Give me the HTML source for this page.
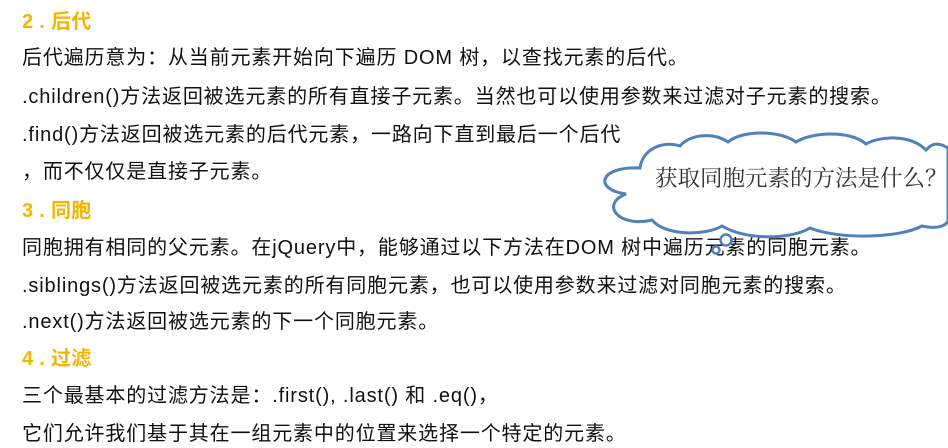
<!DOCTYPE html>
<html><head><meta charset="utf-8"><style>
body{margin:0;width:948px;height:448px;background:#fff;overflow:hidden;position:relative;font-family:"Liberation Sans","Noto Sans CJK SC",sans-serif;color:#111;}
.l{position:absolute;left:22px;font-size:20px;line-height:24px;white-space:nowrap;letter-spacing:0.85px}
.h{color:#f5b400;font-weight:bold;letter-spacing:0.3px}
.c{position:absolute;left:655px;top:161px;font-family:"Liberation Serif","Noto Serif CJK SC",serif;font-size:22.5px;color:#333;white-space:nowrap}
</style></head><body>
<div class="l h" style="top:10px">2 . 后代</div>
<div class="l" style="top:46px">后代遍历意为：从当前元素开始向下遍历 DOM 树，以查找元素的后代。</div>
<div class="l" style="top:85px">.children()方法返回被选元素的所有直接子元素。当然也可以使用参数来过滤对子元素的搜索。</div>
<div class="l" style="top:123px">.find()方法返回被选元素的后代元素，一路向下直到最后一个后代</div>
<div class="l" style="top:160px">，而不仅仅是直接子元素。</div>
<div class="l h" style="top:199px">3 . 同胞</div>
<div class="l" style="top:236px">同胞拥有相同的父元素。在jQuery中，能够通过以下方法在DOM 树中遍历元素的同胞元素。</div>
<div class="l" style="top:274px">.siblings()方法返回被选元素的所有同胞元素，也可以使用参数来过滤对同胞元素的搜索。</div>
<div class="l" style="top:310px">.next()方法返回被选元素的下一个同胞元素。</div>
<div class="l h" style="top:347px">4 . 过滤</div>
<div class="l" style="top:384px">三个最基本的过滤方法是：.first(), .last() 和 .eq()，</div>
<div class="l" style="top:422px">它们允许我们基于其在一组元素中的位置来选择一个特定的元素。</div>
<svg style="position:absolute;left:0;top:0" width="948" height="448">
<path d="M640,168 C598,166 594,190 626,194 C600,204 618,228 652,220 C665,236 705,236 722,226 C745,240 790,240 810,228 C840,240 900,238 922,226 C940,230 948,224 948,220 L948,148 C935,140 930,146 926,150 C910,134 880,136 866,144 C850,130 812,132 796,142 C780,130 742,130 728,142 C714,132 690,134 680,146 C662,140 642,150 640,168 Z" fill="#fff" stroke="#4f81bd" stroke-width="3"/>
<circle cx="726" cy="240" r="5.5" fill="#fff" stroke="#4f81bd" stroke-width="2.5"/>
<circle cx="716" cy="250" r="3.5" fill="#fff" stroke="#4f81bd" stroke-width="2.5"/>
</svg>
<div class="c">获取同胞元素的方法是什么？</div>
</body></html>
